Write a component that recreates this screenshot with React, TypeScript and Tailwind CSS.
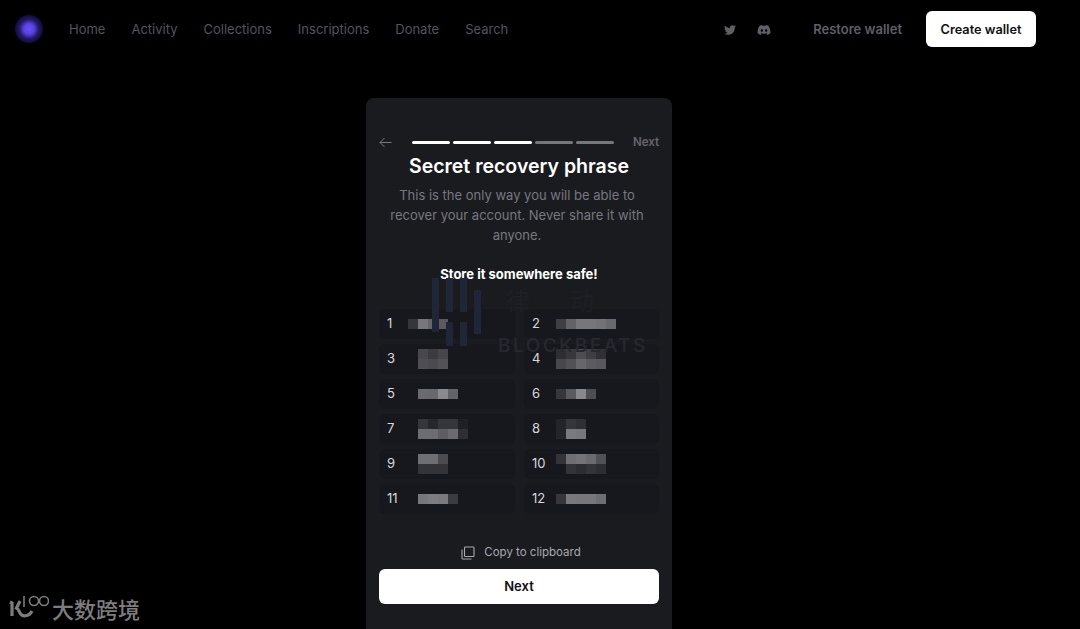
import { FaDiscord, FaTwitter } from "react-icons/fa";

const navLinks = ["Home", "Activity", "Collections", "Inscriptions", "Donate", "Search"];

// grey level of each 10px mosaic cell, one array per pixel row
const words: { n: number; cells: string[][] }[] = [
  { n: 1, cells: [["#36363a", "#77777b", "#67676b", "#5b5b5f"]] },
  { n: 2, cells: [["#3f3f43", "#636367", "#77777b", "#77777b", "#737377", "#69696d"]] },
  {
    n: 3,
    cells: [
      ["#16181e", "#48484c", "#3c3c40", "#47474b"],
      ["#16181e", "#4f4f53", "#4b4b4f", "#535357"],
    ],
  },
  {
    n: 4,
    cells: [
      ["#2e2e33", "#38383c", "#4d4d51", "#3f3f43", "#303035"],
      ["#48484c", "#525256", "#67676b", "#5c5c60", "#58585c"],
    ],
  },
  { n: 5, cells: [["#16181e", "#6b6b6f", "#69696d", "#8a8a8e", "#646468"]] },
  { n: 6, cells: [["#37373b", "#5a5a5e", "#88888c", "#4e4e52"]] },
  {
    n: 7,
    cells: [
      ["#16181e", "#36363a", "#26272c", "#36363a", "#36363a", "#1f2025"],
      ["#16181e", "#6d6d71", "#6d6d71", "#5e5e62", "#6c6c70", "#2e2e33"],
    ],
  },
  {
    n: 8,
    cells: [
      ["#24252a", "#36363a", "#2e2f34", "#16181e"],
      ["#24252a", "#7a7a7e", "#77777b", "#16181e"],
    ],
  },
  {
    n: 9,
    cells: [
      ["#16181e", "#6f6f73", "#6f6f73", "#4c4c50"],
      ["#16181e", "#333338", "#333338", "#333338"],
    ],
  },
  {
    n: 10,
    cells: [
      ["#333338", "#6f6f73", "#747478", "#6a6a6e", "#515155"],
      ["#16181e", "#333338", "#2c2d32", "#333338", "#2c2d32"],
    ],
  },
  { n: 11, cells: [["#16181e", "#77777b", "#7e7e82", "#7b7b7f", "#3c3c40"]] },
  { n: 12, cells: [["#37373b", "#79797d", "#77777b", "#77777b", "#6e6e72"]] },
];

const Mosaic = ({ cells }: { cells: string[][] }) => (
  <div className="flex flex-col">
    {cells.map((row, i) => (
      <div key={i} className="flex">
        {row.map((c, j) => (
          <div key={j} className="h-[10px] w-[10px]" style={{ backgroundColor: c }} />
        ))}
      </div>
    ))}
  </div>
);

export default function App() {
  return (
    <div className="relative h-[629px] overflow-hidden bg-black font-['Inter',sans-serif]">
      <header className="flex h-[58px] items-center pl-[15px] pr-11">
        <div className="flex h-7 w-7 items-center justify-center rounded-full bg-[radial-gradient(circle,#6a4eff_0%,#5a42e0_26%,#241a6a_48%,#110c36_70%,#000000_100%)]" />
        <nav className="ml-[26px] mt-[2px] flex gap-[26px] text-[13px] text-[#54545c]">
          {navLinks.map((l) => (
            <a key={l}>{l}</a>
          ))}
        </nav>
        <div className="ml-auto flex items-center text-[#5f5f66]">
          <FaTwitter size={12} className="mt-[2px]" />
          <FaDiscord size={14} className="ml-[21px] mt-[2px]" />
          <span className="ml-[42px] mt-[2px] text-[13px] font-semibold">Restore wallet</span>
          <button className="ml-6 h-9 w-[110px] rounded-md bg-white pt-[2px] text-[12.75px] font-semibold text-[#111114]">
            Create wallet
          </button>
        </div>
      </header>

      <main className="flex justify-center pr-[42px] pt-10">
        <section className="relative h-[560px] w-[306px] rounded-t-lg bg-[#1a1b1f] px-[13px] pt-[38px]">
          <div className="flex h-3 items-center">
            <svg width="13" height="11" viewBox="0 0 13 11" fill="none" stroke="#77777c" strokeWidth="1">
              <path d="M12.5 5.5H1M5.5 1L1 5.5L5.5 10" />
            </svg>
            <div className="ml-5 flex gap-[3px]">
              <div className="h-[3px] w-[38px] rounded-full bg-white" />
              <div className="h-[3px] w-[38px] rounded-full bg-white" />
              <div className="h-[3px] w-[38px] rounded-full bg-white" />
              <div className="h-[3px] w-[38px] rounded-full bg-[#77777b]" />
              <div className="h-[3px] w-[38px] rounded-full bg-[#77777b]" />
            </div>
            <span className="ml-auto translate-y-px text-[11.5px] font-semibold text-[#66666b]">Next</span>
          </div>

          <h1 className="mt-[5px] text-center text-[19.5px] leading-[26px] font-semibold text-white">
            Secret recovery phrase
          </h1>
          <p className="mt-[6px] pl-[6px] pr-[10px] text-center text-[13px] leading-5 text-[#77787e]">
            This is the only way you will be able to recover your account. Never share it with anyone.
          </p>
          <p className="mt-[19px] text-center text-[13px] leading-5 font-bold text-white">
            Store it somewhere safe!
          </p>

          <div className="mt-[25px] grid grid-cols-[136px_135px] justify-between gap-y-[5px]">
            {words.map((w) => (
              <div key={w.n} className="flex h-[30px] items-center rounded-md bg-[#16181e] pl-2">
                <span className={`shrink-0 text-[13px] text-[#d9d9db] ${w.n % 2 === 0 ? "w-6" : "w-[21px]"}`}>
                  {w.n}
                </span>
                <Mosaic cells={w.cells} />
              </div>
            ))}
          </div>

          <div className="mt-[30px] flex items-center justify-center gap-[9px] pl-1 text-[11.5px] text-[#a9a9ad]">
            <svg width="14" height="14" viewBox="0 0 14 14" fill="none" stroke="currentColor" strokeWidth="1.1">
              <rect x="3.5" y="1" width="9.5" height="9.5" rx="0.8" />
              <path d="M1 3.5V12.2a.8.8 0 0 0 .8.8h8.7" />
            </svg>
            Copy to clipboard
          </div>
          <button className="mt-2 h-[35px] w-full rounded-md bg-white text-[13px] font-semibold text-[#111114]">
            Next
          </button>

          {/* blockbeats watermark over the word grid */}
          <div className="pointer-events-none absolute left-[64px] top-[178px] text-[#1e2638]">
            <svg width="60" height="76" viewBox="0 0 60 76" fill="currentColor">
              <rect x="2" y="2" width="7" height="54" />
              <rect x="16" y="2" width="7" height="34" />
              <rect x="16" y="46" width="7" height="24" />
              <rect x="30" y="2" width="7" height="34" />
              <rect x="30" y="46" width="7" height="24" />
              <rect x="44" y="14" width="7" height="44" />
            </svg>
          </div>
          <span className="pointer-events-none absolute left-[140px] top-[190px] font-['Noto_Sans_CJK_SC',sans-serif] text-[24px] leading-6 tracking-[40px] text-[#1d1f26]">
            律动
          </span>
          <span className="pointer-events-none absolute left-[132px] top-[236px] text-[19px] leading-6 font-medium tracking-[2.5px] text-[#262830]">
            BLOCKBEATS
          </span>
        </section>
      </main>

      {/* 100 大数跨境 watermark */}
      <div className="absolute bottom-[7px] left-[9px] flex items-center text-[#7d7d7d]">
        <svg width="40" height="28" viewBox="0 0 40 28" fill="none" stroke="currentColor" strokeWidth="1.6">
          <path d="M1 8l2 1v13" strokeWidth="3.2" />
          <path d="M11 7L7.5 14c2 1 2.5 3 3.5 5 2 4 9 4 12-2" strokeWidth="3.2" />
          <path d="M15 2v11" />
          <circle cx="25" cy="7" r="4.5" />
          <circle cx="35" cy="7" r="4.5" />
        </svg>
        <span className="ml-[3px] font-['Noto_Sans_CJK_SC',sans-serif] text-[22px] leading-7 font-medium">
          大数跨境
        </span>
      </div>
    </div>
  );
}
